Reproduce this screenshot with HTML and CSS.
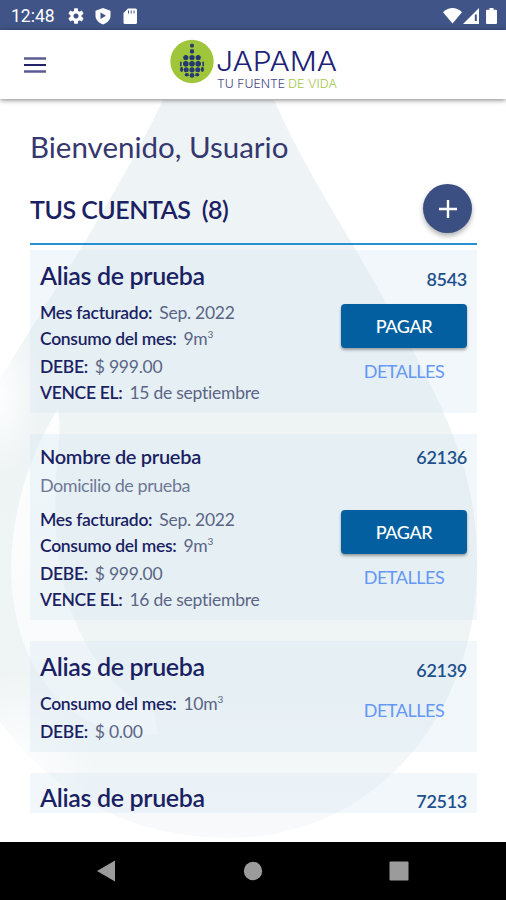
FILE: index.html
```html
<!DOCTYPE html>
<html lang="es">
<head>
    <meta charset="UTF-8">
    <meta name="viewport" content="width=device-width, initial-scale=1.0">
    <title>JAPAMA - Tus cuentas</title>
    <link rel="stylesheet" href="styles.css">
</head>
<body>
    <div class="status-bar">
        <span class="clock">12:48</span>
        <svg class="status-left" width="72" height="18" viewBox="0 0 72 18">
            <g fill="#fff">
                <g transform="translate(8 9)">
                    <circle r="5.6"/>
                    <rect x="-2" y="-7.8" width="4" height="15.6" rx=".8"/>
                    <rect x="-2" y="-7.8" width="4" height="15.6" rx=".8" transform="rotate(60)"/>
                    <rect x="-2" y="-7.8" width="4" height="15.6" rx=".8" transform="rotate(120)"/>
                </g>
                <path d="M35 1l7.500 2.800v5c0 4-3 7-7.500 8.700-4.500-1.700-7.500-4.700-7.500-8.700v-5z"/>
                <path d="M60 1.500h7.500a1.500 1.500 0 0 1 1.500 1.500v12.500a1.500 1.500 0 0 1-1.500 1.500h-10.500a1.500 1.500 0 0 1-1.500-1.500v-9.500z"/>
            </g>
            <circle cx="8" cy="9" r="2.500" fill="#405487"/>
            <path d="M32.500 5.500l5.500 3.300-5.500 3.300z" fill="#405487"/>
            <path d="M60.500 3.500v3M63.200 3.500v3M66 3.500v3" stroke="#405487" stroke-width="1"/>
        </svg>
        <svg class="status-right" width="56" height="18" viewBox="0 0 56 18">
            <path d="M0 5.200Q9.500-3.200 19 5.200L9.500 16.500z" fill="#fff"/>
            <path d="M36 1v16H20z" fill="#fff"/>
            <path d="M32.800 7.500v6.500" stroke="#405487" stroke-width="2"/>
            <path d="M46.500 1h4v1.800h2.500q1 0 1 1V16q0 1-1 1h-9q-1 0-1-1V3.800q0-1 1-1h2.500z" fill="#fff"/>
        </svg>
    </div>

    <header class="app-bar">
        <button class="menu-btn" aria-label="Menú">
            <svg width="22" height="16" viewBox="0 0 22 16">
                <path d="M0 1.500h22M0 14.500h22" stroke="#5c5c95" stroke-width="2.600"/>
                <path d="M0 8h22" stroke="#22226c" stroke-width="2"/>
            </svg>
        </button>
        <svg class="logo" width="170" height="54" viewBox="0 0 170 54">
            <circle cx="22" cy="23.500" r="21.700" fill="#9fc63b"/>
            <g fill="#25386f">
                <rect x="20.200" y="5.700" width="3.600" height="3.800" rx="1"/>
                <rect x="20" y="11.300" width="4" height="4.200" rx="1.200"/>
                <circle cx="15.800" cy="19.600" r="2.600"/><circle cx="22" cy="19.600" r="2.600"/><circle cx="28.200" cy="19.600" r="2.600"/>
                <rect x="10" y="23.500" width="1.600" height="5" rx=".8"/>
                <circle cx="15.800" cy="25.700" r="2.800"/><circle cx="22" cy="25.700" r="2.800"/><circle cx="28.200" cy="25.700" r="2.800"/>
                <rect x="32.400" y="23.500" width="1.600" height="5" rx=".8"/>
                <ellipse cx="11.600" cy="31.500" rx="1.600" ry="2.400"/>
                <circle cx="16.200" cy="31.800" r="2.500"/><circle cx="22" cy="31.800" r="2.600"/><circle cx="27.800" cy="31.800" r="2.500"/>
                <ellipse cx="32.400" cy="31.500" rx="1.600" ry="2.400"/>
                <ellipse cx="16.800" cy="36.800" rx="2.200" ry="1.700"/><circle cx="22" cy="37.400" r="2.400"/><ellipse cx="27.200" cy="36.800" rx="2.200" ry="1.700"/>
            </g>
            <text class="logo-name" x="46" y="33" textLength="121" lengthAdjust="spacingAndGlyphs">JAPAMA</text>
            <text class="logo-tag" x="47" y="50" textLength="68" lengthAdjust="spacingAndGlyphs">TU FUENTE</text>
            <text class="logo-tag green" x="118" y="50" textLength="49" lengthAdjust="spacingAndGlyphs">DE VIDA</text>
        </svg>
    </header>

    <main class="content">
        <svg class="drop" width="506" height="742" viewBox="0 100 506 742">
            <defs>
                <linearGradient id="dropFill" x1="0" y1="0" x2="0" y2="1">
                    <stop offset="0" stop-color="#eef3f5"/>
                    <stop offset=".8" stop-color="#eff4f5"/>
                    <stop offset="1" stop-color="#f8fafb"/>
                </linearGradient>
                <linearGradient id="shine" x1="0" y1="0" x2="0" y2="1">
                    <stop offset="0" stop-color="#fff" stop-opacity=".85"/>
                    <stop offset="1" stop-color="#fff" stop-opacity=".6"/>
                </linearGradient>
                <radialGradient id="edge">
                    <stop offset="0" stop-color="#fff" stop-opacity=".9"/>
                    <stop offset="1" stop-color="#fff" stop-opacity="0"/>
                </radialGradient>
            </defs>
            <path d="M163 100H274C296 150 326 200 353 245C390 310 425 368 449 425C468 472 477 512 477 565C477 720 370 838 230 838C125 838 50 790 0 722L-10 395C45 305 115 200 163 100z" fill="url(#dropFill)"/>
            <ellipse cx="0" cy="395" rx="42" ry="80" fill="url(#edge)"/>
            <ellipse cx="15" cy="770" rx="80" ry="100" fill="url(#edge)"/>
            <path d="M58 408C30 455 11 510 11 570C12 665 68 742 158 734L154 712C112 690 82 650 66 595C53 545 53 490 60 430z" fill="url(#shine)"/>
        </svg>

        <h1 class="welcome">Bienvenido, Usuario</h1>
        <div class="section-head">
            <h2>TUS CUENTAS&nbsp; (8)</h2>
            <button class="add-btn" aria-label="Agregar cuenta">
                <svg width="18" height="18" viewBox="0 0 18 18"><path d="M9 0v18M0 9h18" stroke="#fff" stroke-width="2.400"/></svg>
            </button>
        </div>

        <div class="accounts">
            <section class="card">
                <div class="card-head">
                    <h3>Alias de prueba</h3>
                    <span class="number">8543</span>
                </div>
                <div class="card-body">
                    <div class="data">
                        <p><b>Mes facturado:</b><span>Sep. 2022</span></p>
                        <p class="usage"><b>Consumo del mes:</b><span>9m<sup>3</sup></span></p>
                        <p><b>DEBE:</b><span>$ 999.00</span></p>
                        <p><b>VENCE EL:</b><span>15 de septiembre</span></p>
                    </div>
                    <div class="actions">
                        <button class="pay">PAGAR</button>
                        <a class="details">DETALLES</a>
                    </div>
                </div>
            </section>

            <section class="card named">
                <div class="card-head">
                    <h3>Nombre de prueba</h3>
                    <span class="number">62136</span>
                </div>
                <p class="address">Domicilio de prueba</p>
                <div class="card-body">
                    <div class="data">
                        <p><b>Mes facturado:</b><span>Sep. 2022</span></p>
                        <p class="usage"><b>Consumo del mes:</b><span>9m<sup>3</sup></span></p>
                        <p><b>DEBE:</b><span>$ 999.00</span></p>
                        <p><b>VENCE EL:</b><span>16 de septiembre</span></p>
                    </div>
                    <div class="actions">
                        <button class="pay">PAGAR</button>
                        <a class="details">DETALLES</a>
                    </div>
                </div>
            </section>

            <section class="card paid">
                <div class="card-head">
                    <h3>Alias de prueba</h3>
                    <span class="number">62139</span>
                </div>
                <div class="card-body">
                    <div class="data">
                        <p class="usage"><b>Consumo del mes:</b><span>10m<sup>3</sup></span></p>
                        <p><b>DEBE:</b><span>$ 0.00</span></p>
                    </div>
                    <div class="actions">
                        <a class="details">DETALLES</a>
                    </div>
                </div>
            </section>

            <section class="card last">
                <div class="card-head">
                    <h3>Alias de prueba</h3>
                    <span class="number">72513</span>
                </div>
            </section>
        </div>
    </main>

    <nav class="nav-bar">
        <svg width="20" height="22" viewBox="0 0 20 22"><path d="M19 .5v21L1 11z" fill="#9b9b9b"/></svg>
        <svg width="20" height="20" viewBox="0 0 20 20"><circle cx="10" cy="10" r="9.200" fill="#9b9b9b"/></svg>
        <svg width="20" height="20" viewBox="0 0 20 20"><rect x=".5" y=".5" width="19" height="19" rx="1" fill="#9b9b9b"/></svg>
    </nav>
</body>
</html>
```
FILE: styles.css
```css
* {
    box-sizing: border-box;
}
body {
    margin: 0;
    height: 900px;
    display: flex;
    flex-direction: column;
    overflow: hidden;
    background-color: #fff;
    color: #1b1f63;
    font-family: Lato, sans-serif;
}
h1, h2, h3, p {
    margin: 0;
}
button {
    border: none;
    padding: 0;
    font-family: inherit;
    cursor: pointer;
}
.status-bar {
    height: 30px;
    flex: none;
    display: flex;
    align-items: center;
    padding: 2px 7px 0 11px;
    background-color: #405487;
    color: #fff;
}
.clock {
    width: 57px;
    font-family: Roboto, sans-serif;
    font-size: 17.5px;
}
.status-right {
    margin-left: auto;
}
.app-bar {
    height: 69px;
    flex: none;
    display: flex;
    align-items: center;
    padding-left: 24px;
    background-color: #fff;
    box-shadow: 0 1px 5px rgba(0, 0, 0, 0.5);
    z-index: 1;
}
.menu-btn {
    width: 22px;
    height: 16px;
    display: flex;
    background: none;
}
.logo {
    margin-left: 124px;
}
.logo-name {
    font-family: Inter, sans-serif;
    font-size: 26.5px;
    font-weight: 300;
    fill: #1d2277;
}
.logo-tag {
    font-family: Inter, sans-serif;
    font-size: 11px;
    font-weight: 300;
    fill: #4a4a88;
}
.logo-tag.green {
    fill: #a5c84a;
}
.content {
    flex: 1;
    min-height: 0;
    position: relative;
    padding: 28px 29px 0 30px;
    overflow: hidden;
}
.drop {
    position: absolute;
    top: 1px;
    left: 0;
    z-index: -1;
}
.welcome {
    height: 40px;
    line-height: 40px;
    font-size: 29.5px;
    font-weight: 400;
    color: #34386f;
}
.section-head {
    height: 78px;
    display: flex;
    justify-content: space-between;
    align-items: flex-start;
    padding: 17px 5px 0 0;
    border-bottom: 2px solid #2b8fd4;
}
.section-head h2 {
    padding-top: 8px;
    line-height: 34px;
    font-size: 25px;
    font-weight: 600;
    letter-spacing: -0.5px;
}
.add-btn {
    width: 49px;
    height: 49px;
    display: flex;
    align-items: center;
    justify-content: center;
    border-radius: 50%;
    background-color: #3c4f82;
    box-shadow: 0 3px 5px rgba(0, 0, 0, 0.3);
}
.accounts {
    display: flex;
    flex-direction: column;
    gap: 21px;
    margin-top: 5px;
}
.card {
    height: 163px;
    padding: 8px 10px 0;
    background-color: rgba(214, 233, 243, 0.34);
}
.card.named {
    height: 186px;
}
.card.paid {
    height: 111px;
}
.card.last {
    height: 40px;
    padding-top: 7px;
}
.card-head {
    height: 34px;
    display: flex;
    justify-content: space-between;
    align-items: center;
}
.card-head h3 {
    line-height: 34px;
    font-size: 25px;
    font-weight: 600;
    letter-spacing: -0.35px;
}
.named .card-head {
    height: 28px;
}
.card.named h3 {
    line-height: 28px;
    font-size: 20px;
    letter-spacing: -0.3px;
}
.number {
    padding-top: 7px;
    font-size: 18px;
    font-weight: 600;
    letter-spacing: -0.3px;
    color: #20508c;
}
.named .number {
    padding-top: 2px;
}
.address {
    height: 29px;
    line-height: 31px;
    font-size: 18px;
    letter-spacing: -0.45px;
    color: #6f7897;
}
.card-body {
    display: flex;
    justify-content: space-between;
    padding-top: 7px;
}
.data {
    padding-top: 1px;
    font-size: 17.5px;
    line-height: 26px;
    letter-spacing: -0.25px;
    color: #5b6585;
}
.data p {
    height: 26px;
    white-space: nowrap;
}
.data .usage {
    height: 28px;
}
.data b {
    margin-right: 7px;
    font-weight: 600;
    letter-spacing: -0.3px;
    color: #1b1f63;
}
.data sup {
    font-size: 10px;
    line-height: 0;
    vertical-align: 7px;
}
.actions {
    width: 126px;
    display: flex;
    flex-direction: column;
    align-items: center;
    padding-top: 5px;
}
.named .actions {
    padding-top: 4px;
}
.pay {
    width: 126px;
    height: 44px;
    border-radius: 4px;
    background-color: #035f9f;
    box-shadow: 0 2px 3px rgba(0, 0, 0, 0.35);
    color: #fff;
    font-size: 18px;
    font-weight: 500;
    letter-spacing: -0.4px;
}
.details {
    margin-top: 10px;
    line-height: 26px;
    font-size: 18px;
    letter-spacing: -0.45px;
    color: #6597f5;
}
.paid .details {
    margin-top: 2px;
}
.nav-bar {
    height: 58px;
    flex: none;
    display: flex;
    align-items: center;
    justify-content: space-between;
    padding: 0 97px 0 96px;
    background-color: #000;
}
```
